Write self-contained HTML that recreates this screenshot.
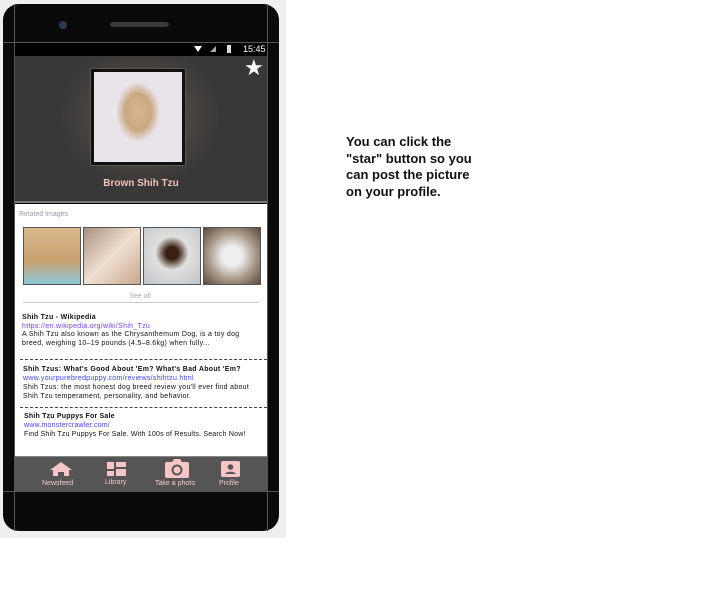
<!DOCTYPE html>
<html><head><style>
*{margin:0;padding:0;box-sizing:border-box}
body{width:712px;height:592px;background:#fff;position:relative;font-family:"Liberation Sans",Arial,sans-serif;overflow:hidden}
.a{position:absolute}
</style></head><body>
<div class="a" style="left:0;top:0;width:286px;height:538px;background:#efefef"></div>
<div class="a" style="left:3px;top:4px;width:276px;height:527px;background:#0a0a0a;border-radius:16px"></div>
<div class="a" style="left:14px;top:4px;width:1px;height:527px;background:#555"></div>
<div class="a" style="left:267px;top:4px;width:1px;height:527px;background:#555"></div>
<div class="a" style="left:3px;top:42px;width:276px;height:1px;background:#555"></div>
<div class="a" style="left:3px;top:491px;width:276px;height:1px;background:#555"></div>
<div class="a" style="left:59px;top:21px;width:8px;height:8px;border-radius:50%;background:#2a3a50"></div>
<div class="a" style="left:110px;top:22px;width:59px;height:5px;border-radius:3px;background:#3a3a3a"></div>
<!-- status -->
<div class="a" style="left:15px;top:43px;width:252px;height:13px;background:#000"></div>
<div class="a" style="left:194px;top:46px;width:0;height:0;border-left:4px solid transparent;border-right:4px solid transparent;border-top:6px solid #fff"></div>
<div class="a" style="left:210px;top:46px;width:0;height:0;border-left:6px solid transparent;border-bottom:6px solid #aaa"></div>
<div class="a" style="left:227px;top:45px;width:4px;height:8px;background:#ddd"></div>
<div class="a" style="left:243px;top:44px;color:#fff;font-size:9px">15:45</div>
<!-- hero -->
<div class="a" style="left:15px;top:56px;width:252px;height:147px;background:radial-gradient(ellipse 80px 70px at 125px 60px,#625850,#423f3c 80%,#383838);border-bottom:2px solid #777"></div>
<div class="a" style="left:90px;top:68px;width:96px;height:98px;background:#111;border:1px solid #555"></div>
<div class="a" style="left:94px;top:72px;width:88px;height:90px;background:radial-gradient(ellipse 22px 30px at 44px 40px,#d8b890,#c9a882 60%,#e8e4ea 100%)"></div>
<div class="a" style="left:244px;top:55px;color:#fff;font-size:22px">★</div>
<div class="a" style="left:0;top:178px;width:282px;text-align:center;color:#f4c0b8;font-weight:bold;font-size:10px">Brown Shih Tzu</div>
<!-- content -->
<div class="a" style="left:15px;top:204px;width:252px;height:252px;background:#fff"></div>
<div class="a" style="left:19px;top:211px;color:#99a;font-size:7px">Related Images</div>
<div class="a" style="left:23px;top:227px;width:58px;height:58px;border:1px solid #555;background:linear-gradient(#d8b88a,#c8a070 60%,#8cc8d8)"></div>
<div class="a" style="left:83px;top:227px;width:58px;height:58px;border:1px solid #555;background:linear-gradient(135deg,#a89080,#f0e0d0 50%,#c8a890)"></div>
<div class="a" style="left:143px;top:227px;width:58px;height:58px;border:1px solid #555;background:radial-gradient(circle at 50% 45%,#3a2010 15%,#e0e0e0 40%,#c0c4c8)"></div>
<div class="a" style="left:203px;top:227px;width:58px;height:58px;border:1px solid #555;background:radial-gradient(circle at 50% 50%,#eee 25%,#a89888 60%,#5a4a40)"></div>
<div class="a" style="left:0;top:293px;width:280px;text-align:center;color:#aab;font-size:7px">See all</div>
<div class="a" style="left:23px;top:302px;width:236px;height:1px;background:#ccc"></div>
<div class="a" style="left:22px;top:314px;font-size:7px;line-height:8.5px;color:#111;letter-spacing:.3px">
<b>Shih Tzu - Wikipedia</b><br><span style="color:#7040ff">https://en.wikipedia.org/wiki/Shih_Tzu</span><br>A Shih Tzu also known as the Chrysanthemum Dog, is a toy dog<br>breed, weighing 10–19 pounds (4.5–8.6kg) when fully...</div>
<div class="a" style="left:20px;top:359px;width:247px;border-top:1px dashed #444"></div>
<div class="a" style="left:23px;top:365px;font-size:7px;line-height:9px;color:#111;letter-spacing:.3px">
<b>Shih Tzus: What's Good About 'Em? What's Bad About 'Em?</b><br><span style="color:#4040ff">www.yourpurebredpuppy.com/reviews/shihtzu.html</span><br>Shih Tzus: the most honest dog breed review you'll ever find about<br>Shih Tzu temperament, personality, and behavior.</div>
<div class="a" style="left:20px;top:407px;width:247px;border-top:1px dashed #444"></div>
<div class="a" style="left:24px;top:412px;font-size:7px;line-height:9px;color:#111;letter-spacing:.2px">
<b>Shih Tzu Puppys For Sale</b><br><span style="color:#4040ff">www.monstercrawler.com/</span><br>Find Shih Tzu Puppys For Sale. With 100s of Results. Search Now!</div>
<!-- nav -->
<div class="a" style="left:15px;top:456px;width:252px;height:35px;background:#555;border-top:1px solid #888"></div>
<svg class="a" style="left:50px;top:462px" width="22" height="14" viewBox="0 0 22 14"><path d="M11 0L0 8h3v6h5v-4h6v4h5V8h3z" fill="#f6c6c6"/></svg>
<div class="a" style="left:107px;top:462px;width:7px;height:7px;background:#f6c6c6"></div>
<div class="a" style="left:116px;top:462px;width:10px;height:5px;background:#f6c6c6"></div>
<div class="a" style="left:107px;top:471px;width:7px;height:5px;background:#f6c6c6"></div>
<div class="a" style="left:116px;top:469px;width:10px;height:7px;background:#f6c6c6"></div>
<svg class="a" style="left:165px;top:459px" width="24" height="19" viewBox="0 0 24 19"><path d="M2 3h5l2-3h6l2 3h5a2 2 0 0 1 2 2v12a2 2 0 0 1-2 2H2a2 2 0 0 1-2-2V5a2 2 0 0 1 2-2z" fill="#f6c6c6"/><circle cx="12" cy="11" r="4.5" fill="none" stroke="#555" stroke-width="2"/></svg>
<svg class="a" style="left:221px;top:461px" width="19" height="16" viewBox="0 0 19 16"><rect width="19" height="16" rx="2" fill="#f6c6c6"/><circle cx="9.5" cy="6" r="2.8" fill="#555"/><path d="M4 13c1-3 10-3 11 0z" fill="#555"/></svg>
<div class="a" style="left:42px;top:480px;font-size:7px;color:#f4c8c8">Newsfeed</div>
<div class="a" style="left:105px;top:479px;font-size:7px;color:#f4c8c8">Library</div>
<div class="a" style="left:155px;top:480px;font-size:7px;color:#f4c8c8">Take a photo</div>
<div class="a" style="left:219px;top:480px;font-size:7px;color:#f4c8c8">Profile</div>
<div class="a" style="left:346px;top:134px;font-size:13px;font-weight:bold;line-height:16.5px;color:#111">You can click the<br>"star" button so you<br>can post the picture<br>on your profile.</div>
</body></html>
